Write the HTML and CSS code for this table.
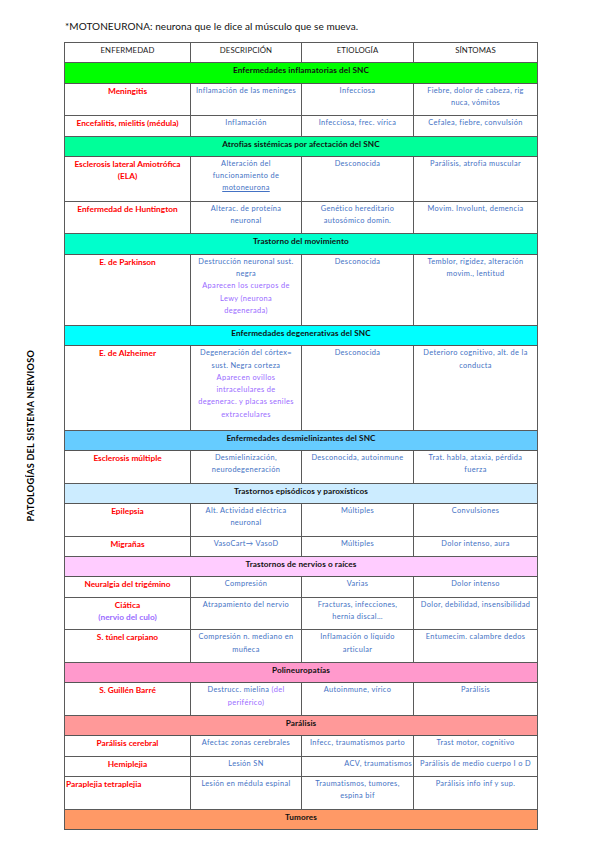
FILE: index.html
```html
<!DOCTYPE html>
<html lang="es">
<head>
<meta charset="utf-8">
<title>Patologías del sistema nervioso</title>
<link rel="stylesheet" href="styles.css">
</head>
<body>
<div class="page">
  <p class="note">*MOTONEURONA: neurona que le dice al músculo que se mueva.</p>
  <div class="main">
    <div class="side"><span class="side-label">PATOLOGÍAS DEL SISTEMA NERVIOSO</span></div>
    <table class="grid">
      <colgroup>
        <col class="c1"><col class="c2"><col class="c3"><col class="c4">
      </colgroup>
      <thead>
        <tr class="head"><th>ENFERMEDAD</th><th>DESCRIPCIÓN</th><th>ETIOLOGÍA</th><th class="last">SÍNTOMAS</th></tr>
      </thead>
      <tbody>
        <tr class="band b-green"><td colspan="4">Enfermedades inflamatorias del SNC</td></tr>
        <tr><td class="name">Meningitis</td><td class="txt">Inflamación de las meninges</td><td class="txt">Infecciosa</td><td class="txt last">Fiebre, dolor de cabeza, rig<br>nuca, vómitos</td></tr>
        <tr><td class="name">Encefalitis, mielitis (médula)</td><td class="txt">Inflamación</td><td class="txt">Infecciosa, frec. vírica</td><td class="txt last">Cefalea, fiebre, convulsión</td></tr>

        <tr class="band b-spring"><td colspan="4">Atrofias sistémicas por afectación del SNC</td></tr>
        <tr><td class="name">Esclerosis lateral Amiotrófica<br>(ELA)</td><td class="txt">Alteración del<br>funcionamiento de<br><span class="ul">motoneurona</span></td><td class="txt">Desconocida</td><td class="txt last">Parálisis, atrofia muscular</td></tr>
        <tr><td class="name">Enfermedad de Huntington</td><td class="txt">Alterac. de proteína<br>neuronal</td><td class="txt">Genético hereditario<br>autosómico domin.</td><td class="txt last">Movim. Involunt, demencia</td></tr>

        <tr class="band b-aqua"><td colspan="4">Trastorno del movimiento</td></tr>
        <tr class="r5"><td class="name">E. de Parkinson</td><td class="txt">Destrucción neuronal sust.<br>negra<br><span class="purple">Aparecen los cuerpos de<br>Lewy (neurona<br>degenerada)</span></td><td class="txt">Desconocida</td><td class="txt last">Temblor, rigidez, alteración<br>movim., lentitud</td></tr>

        <tr class="band b-cyan"><td colspan="4">Enfermedades degenerativas del SNC</td></tr>
        <tr class="r6"><td class="name">E. de Alzheimer</td><td class="txt">Degeneración del córtex=<br>sust. Negra corteza<br><span class="purple">Aparecen ovillos<br>intracelulares de<br>degenerac. y placas seniles<br>extracelulares</span></td><td class="txt">Desconocida</td><td class="txt last">Deterioro cognitivo, alt. de la<br>conducta</td></tr>

        <tr class="band b-sky"><td colspan="4">Enfermedades desmielinizantes del SNC</td></tr>
        <tr><td class="name">Esclerosis múltiple</td><td class="txt">Desmielinización,<br>neurodegeneración</td><td class="txt">Desconocida, autoinmune</td><td class="txt last">Trat. habla, ataxia, pérdida<br>fuerza</td></tr>

        <tr class="band b-pale"><td colspan="4">Trastornos episódicos y paroxísticos</td></tr>
        <tr><td class="name">Epilepsia</td><td class="txt">Alt. Actividad eléctrica<br>neuronal</td><td class="txt">Múltiples</td><td class="txt last">Convulsiones</td></tr>
        <tr><td class="name">Migrañas</td><td class="txt">VasoCart→ VasoD</td><td class="txt">Múltiples</td><td class="txt last">Dolor intenso, aura</td></tr>

        <tr class="band b-lilac"><td colspan="4">Trastornos de nervios o raíces</td></tr>
        <tr><td class="name">Neuralgia del trigémino</td><td class="txt">Compresión</td><td class="txt">Varias</td><td class="txt last">Dolor intenso</td></tr>
        <tr><td class="name">Ciática<br><span class="purple">(nervio del culo)</span></td><td class="txt">Atrapamiento del nervio</td><td class="txt">Fracturas, infecciones,<br>hernia discal…</td><td class="txt last">Dolor, debilidad, insensibilidad</td></tr>
        <tr><td class="name">S. túnel carpiano</td><td class="txt">Compresión n. mediano en<br>muñeca</td><td class="txt">Inflamación o líquido<br>articular</td><td class="txt last">Entumecim. calambre dedos</td></tr>

        <tr class="band b-pink"><td colspan="4">Polineuropatías</td></tr>
        <tr><td class="name">S. Guillén Barré</td><td class="txt">Destrucc. mielina <span class="purple">(del<br>periférico)</span></td><td class="txt">Autoinmune, vírico</td><td class="txt last">Parálisis</td></tr>

        <tr class="band b-salmon"><td colspan="4">Parálisis</td></tr>
        <tr><td class="name">Parálisis cerebral</td><td class="txt">Afectac zonas cerebrales</td><td class="txt">Infecc, traumatismos parto</td><td class="txt last">Trast motor, cognitivo</td></tr>
        <tr><td class="name">Hemiplejia</td><td class="txt">Lesión SN</td><td class="txt right">ACV, traumatismos</td><td class="txt last">Parálisis de medio cuerpo I o D</td></tr>
        <tr><td class="name left">Paraplejia tetraplejia</td><td class="txt">Lesión en médula espinal</td><td class="txt">Traumatismos, tumores,<br>espina bif</td><td class="txt last">Parálisis info inf y sup.</td></tr>

        <tr class="band b-orange"><td colspan="4">Tumores</td></tr>
      </tbody>
    </table>
  </div>
</div>
</body>
</html>
```

FILE: styles.css
```css
html, body {
  margin: 0;
  padding: 0;
  background: #ffffff;
}

body {
  font-family: "Lato", "Open Sans", "Liberation Sans", sans-serif;
  color: #111111;
}

.page {
  padding-top: 20px;
}

.note {
  margin: 0 0 10px 65px;
  font-size: 10px;
  line-height: 12px;
  letter-spacing: 0.07px;
  color: #111111;
}

.main {
  display: flex;
  align-items: stretch;
}

.side {
  width: 60px;
  padding-right: 4px;
  display: flex;
  align-items: center;
  justify-content: center;
}

.side-label {
  writing-mode: vertical-rl;
  transform: rotate(180deg);
  font-weight: 700;
  font-size: 9.1px;
  letter-spacing: 0.25px;
  color: #000000;
  white-space: nowrap;
}

.grid {
  border-collapse: collapse;
  table-layout: fixed;
  width: 473px;
  border: 1.5px solid #8a8a8a;
}

.c1 { width: 126px; }
.c2 { width: 111px; }
.c3 { width: 112px; }
.c4 { width: 124px; }

.grid th,
.grid td {
  border: 1px solid #5a5a5a;
  padding: 1px 1px 6.1px;
  line-height: 12.25px;
  text-align: center;
  vertical-align: top;
  white-space: nowrap;
  overflow: hidden;
}

.grid .last {
  border-left: 1.5px solid #a8a8a8;
}

.head th {
  font-weight: 400;
  font-size: 7.8px;
  color: #1a1a1a;
  letter-spacing: 0.1px;
}

.band td {
  font-weight: 700;
  font-size: 8.2px;
  letter-spacing: 0.1px;
  color: #111111;
  border-top: 1.5px solid #555555;
  border-bottom: 1.5px solid #555555;
}

.b-green  td { background: #00ff00; }
.b-spring td { background: #00ff99; }
.b-aqua   td { background: #00ffcc; }
.b-cyan   td { background: #00ffff; }
.b-sky    td { background: #66ccff; }
.b-pale   td { background: #ccecff; }
.b-lilac  td { background: #ffccff; }
.b-pink   td { background: #ff99cc; }
.b-salmon td { background: #ff9999; }
.b-orange td { background: #ff9966; }

.name {
  color: #ff0000;
  font-weight: 700;
  font-size: 8.3px;
}

.txt {
  color: #4472c4;
  font-size: 7.4px;
  letter-spacing: 0.35px;
}

.purple {
  color: #9a6bff;
}

.ul {
  text-decoration: underline;
}

.grid .left {
  text-align: left;
  padding-left: 1px;
}

.grid .right {
  text-align: right;
  padding-right: 1px;
}

.r5 td {
  padding-bottom: 8px;
}

.r6 td {
  padding-bottom: 9px;
}
```
